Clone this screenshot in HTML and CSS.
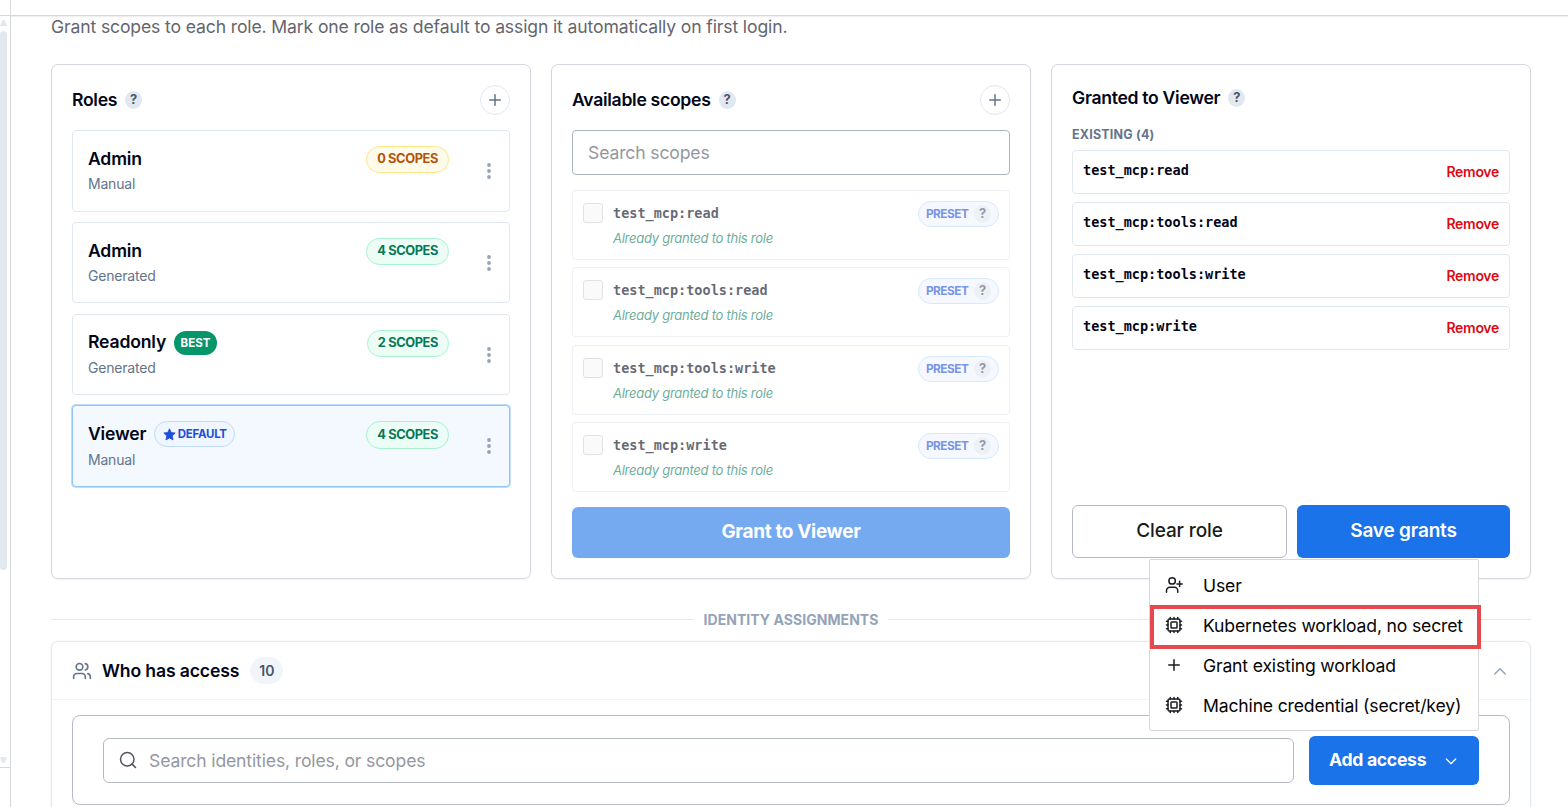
FILE: index.html
```html
<!DOCTYPE html>
<html lang="en">
<head>
<meta charset="utf-8">
<title>Roles and scopes</title>
<link rel="stylesheet" href="styles.css">
</head>
<body>
<svg class="defs" aria-hidden="true">
  <symbol id="plus" viewBox="0 0 24 24"><path d="M5 12h14M12 5v14"/></symbol>
  <symbol id="dots" viewBox="0 0 4 16"><circle cx="2" cy="2" r="1.9"/><circle cx="2" cy="8" r="1.9"/><circle cx="2" cy="14" r="1.9"/></symbol>
  <symbol id="cpu" viewBox="0 0 24 24"><rect x="4" y="4" width="16" height="16" rx="2"/><rect x="8" y="8" width="8" height="8" rx="1"/><path d="M12 20v2M12 2v2M17 20v2M17 2v2M2 12h2M2 17h2M2 7h2M20 12h2M20 17h2M20 7h2M7 20v2M7 2v2"/></symbol>
  <symbol id="user-plus" viewBox="0 0 24 24"><path d="M2 21.500v-2a4.500 4.500 0 0 1 4.500-4.500h6a4.500 4.500 0 0 1 4.500 4.500v2"/><circle cx="9.5" cy="6.500" r="4.300"/><path d="M19.500 7v7M16 10.500h7"/></symbol>
  <symbol id="users" viewBox="0 0 24 24"><path d="M16 21v-2a4 4 0 0 0-4-4H6a4 4 0 0 0-4 4v2"/><path d="M16 3.128a4 4 0 0 1 0 7.744M22 21v-2a4 4 0 0 0-3-3.870"/><circle cx="9" cy="7" r="4"/></symbol>
  <symbol id="search" viewBox="0 0 24 24"><circle cx="11" cy="11" r="9"/><path d="m22 22-4.500-4.500"/></symbol>
  <symbol id="up" viewBox="0 0 24 24"><path d="m5 16 7-7 7 7"/></symbol>
  <symbol id="down" viewBox="0 0 24 24"><path d="m5 9 7 7 7-7"/></symbol>
  <symbol id="star" viewBox="0 0 24 24"><path d="M12 1.500l3.200 6.800 7.300 1-5.300 5.200 1.300 7.500L12 18.400 5.500 22l1.300-7.500L1.500 9.300l7.300-1z" stroke="currentColor" stroke-width="1.500" stroke-linejoin="round"/></symbol>
</svg>
<div class="shell">
  <aside class="sidebar">
    <div class="side-head"></div>
    <div class="side-scroll"><i class="arrow-up"></i><i class="thumb"></i><i class="arrow-down"></i></div>
    <div class="side-foot"></div>
  </aside>
  <div class="page">
    <header class="topbar"></header>
    <main class="content">
      <p class="intro">Grant scopes to each role. Mark one role as default to assign it automatically on first login.</p>
      <div class="columns">
        <section class="card">
          <div class="card-head"><h2 class="title">Roles</h2><span class="help">?</span><button class="round"><svg class="ic"><use href="#plus"/></svg></button></div>
          <div class="roles">
            <article class="role"><div class="role-main"><div class="role-line"><b class="role-name">Admin</b></div><span class="role-kind">Manual</span></div><span class="count warn">0 SCOPES</span><svg class="dots"><use href="#dots"/></svg></article>
            <article class="role"><div class="role-main"><div class="role-line"><b class="role-name">Admin</b></div><span class="role-kind">Generated</span></div><span class="count">4 SCOPES</span><svg class="dots"><use href="#dots"/></svg></article>
            <article class="role"><div class="role-main"><div class="role-line"><b class="role-name">Readonly</b><span class="best">BEST</span></div><span class="role-kind">Generated</span></div><span class="count">2 SCOPES</span><svg class="dots"><use href="#dots"/></svg></article>
            <article class="role selected"><div class="role-main"><div class="role-line"><b class="role-name">Viewer</b><span class="default"><svg class="star"><use href="#star"/></svg>DEFAULT</span></div><span class="role-kind">Manual</span></div><span class="count">4 SCOPES</span><svg class="dots"><use href="#dots"/></svg></article>
          </div>
        </section>
        <section class="card">
          <div class="card-head"><h2 class="title">Available scopes</h2><span class="help">?</span><button class="round"><svg class="ic"><use href="#plus"/></svg></button></div>
          <div class="field">Search scopes</div>
          <div class="scopes">
            <div class="scope"><i class="check"></i><div class="scope-main"><code class="code">test_mcp:read</code><em class="note">Already granted to this role</em></div><span class="preset">PRESET<span class="help">?</span></span></div>
            <div class="scope"><i class="check"></i><div class="scope-main"><code class="code">test_mcp:tools:read</code><em class="note">Already granted to this role</em></div><span class="preset">PRESET<span class="help">?</span></span></div>
            <div class="scope"><i class="check"></i><div class="scope-main"><code class="code">test_mcp:tools:write</code><em class="note">Already granted to this role</em></div><span class="preset">PRESET<span class="help">?</span></span></div>
            <div class="scope"><i class="check"></i><div class="scope-main"><code class="code">test_mcp:write</code><em class="note">Already granted to this role</em></div><span class="preset">PRESET<span class="help">?</span></span></div>
          </div>
          <button class="btn primary disabled">Grant to Viewer</button>
        </section>
        <section class="card">
          <div class="card-head compact"><h2 class="title">Granted to Viewer</h2><span class="help">?</span></div>
          <h3 class="existing">EXISTING (4)</h3>
          <div class="grants">
            <div class="grant"><code class="code">test_mcp:read</code><span class="remove">Remove</span></div>
            <div class="grant"><code class="code">test_mcp:tools:read</code><span class="remove">Remove</span></div>
            <div class="grant"><code class="code">test_mcp:tools:write</code><span class="remove">Remove</span></div>
            <div class="grant"><code class="code">test_mcp:write</code><span class="remove">Remove</span></div>
          </div>
          <div class="actions"><button class="btn outline">Clear role</button><button class="btn primary">Save grants</button></div>
        </section>
      </div>
      <div class="divider"><span>IDENTITY ASSIGNMENTS</span></div>
      <section class="access">
        <div class="access-head"><svg class="ic users"><use href="#users"/></svg><h2 class="title wide">Who has access</h2><span class="num">10</span><svg class="ic up"><use href="#up"/></svg></div>
        <div class="access-body">
          <div class="toolbar">
            <div class="search"><svg class="ic mag"><use href="#search"/></svg>Search identities, roles, or scopes</div>
            <div class="add-wrap">
              <button class="add"><span>Add access</span><svg class="ic"><use href="#down"/></svg></button>
              <div class="menu">
                <div class="item"><svg class="ic"><use href="#user-plus"/></svg>User</div>
                <div class="item marked"><svg class="ic"><use href="#cpu"/></svg>Kubernetes workload, no secret</div>
                <div class="item"><svg class="ic"><use href="#plus"/></svg>Grant existing workload</div>
                <div class="item"><svg class="ic"><use href="#cpu"/></svg>Machine credential (secret/key)</div>
              </div>
            </div>
          </div>
        </div>
      </section>
    </main>
  </div>
</div>
</body>
</html>
```
FILE: styles.css
```css
* { box-sizing: border-box; }
body { margin: 0; font-family: Inter, "Liberation Sans", sans-serif; color: #020617; background: #fff; overflow: hidden; }
h2, h3, p { margin: 0; }
button { font: inherit; padding: 0; }
.defs { display: none; }
.ic { fill: none; stroke: currentColor; stroke-width: 2; stroke-linecap: round; stroke-linejoin: round; width: 18px; height: 18px; flex: none; }

.shell { display: flex; height: 807px; overflow: hidden; }
.sidebar { width: 11px; flex: none; border-right: 1px solid #d5d7dc; display: flex; flex-direction: column; }
.side-head { height: 16px; border-bottom: 1px solid #d5d7dc; }
.side-scroll { height: 752px; border-bottom: 1px solid #d5d7dc; display: flex; flex-direction: column; padding: 4px 0; }
.arrow-up { width: 7px; height: 6px; background: #e2e8f0; clip-path: polygon(35% 0, 65% 0, 100% 100%, 0 100%); }
.thumb { width: 7px; height: 539px; margin-top: 5px; background: #e2e8f0; border-radius: 4px; }
.arrow-down { width: 7px; height: 6px; margin-top: auto; background: #e2e8f0; clip-path: polygon(0 0, 100% 0, 65% 100%, 35% 100%); }
.page { flex: 1; min-width: 0; }
.topbar { height: 16px; border-bottom: 1px solid #d5d7dc; box-shadow: 0 1px 1px #f0f0f2; }
.content { padding: 0 37px 0 40px; }

.intro { height: 48px; line-height: 22px; font-size: 17.6px; letter-spacing: -.14px; color: #64666d; white-space: nowrap; }
.columns { display: grid; grid-template-columns: repeat(3, 1fr); gap: 20px; }
.card { height: 515px; border: 1px solid #d5d7de; border-radius: 7px; padding: 20px; box-shadow: 0 1px 2px #0000000c; display: flex; flex-direction: column; }
.card-head { display: flex; align-items: center; height: 30px; flex: none; }
.card-head.compact { height: 25px; }
.title { font-size: 17.600px; line-height: 24px; font-weight: 600; letter-spacing: -.3px; white-space: nowrap; }
.title.wide { letter-spacing: -.14px; }
.help { width: 17px; height: 18px; margin-left: 8px; border-radius: 50%; background: #e2e8f0; color: #475569; font-size: 12.800px; font-weight: 700; line-height: 17px; text-align: center; }
.round { margin-left: auto; width: 30px; height: 30px; border: 1px solid #e2e8f0; border-radius: 50%; background: #fff; color: #64748b; display: grid; place-items: center; }

.roles { display: flex; flex-direction: column; gap: 10.200px; margin-top: 15px; }
.role { height: 81.600px; border: 1px solid #e2e8f0; border-radius: 4px; display: flex; padding: 15px 18px 0 15px; }
.role.selected { background: #f4f8ff; border-color: #93c5fd; box-shadow: 0 0 0 1px #bfdbfe; }
.role-main { flex: 1; }
.role-line { display: flex; align-items: center; height: 26px; gap: 8px; }
.role-name { font-size: 17.600px; font-weight: 600; letter-spacing: -.18px; line-height: 24px; margin-top: -.2px; }
.role:first-child .role-name, .selected .role-name { margin-top: -1px; }
.role-kind { display: block; font-size: 14px; line-height: 24px; letter-spacing: -.2px; color: #64748b; }
.selected .role-kind { line-height: 25px; }
.best { height: 24px; line-height: 24px; padding: 0 6.500px; border-radius: 12px; background: #059669; color: #fff; font-size: 11.500px; font-weight: 700; }
.default { height: 26px; padding: 0 7px 0 8px; border: 1px solid #bfdbfe; border-radius: 13px; background: #eff6ff; color: #1d4ed8; display: flex; align-items: center; gap: 1.500px; font-size: 11.500px; font-weight: 700; letter-spacing: -.3px; }
.star { width: 13px; height: 13px; fill: currentColor; }
.count { height: 27px; line-height: 24px; padding: 0 10px; border: 1px solid #a7f3d0; border-radius: 14px; background: #ecfdf5; color: #047857; font-size: 12.800px; font-weight: 700; letter-spacing: -.38px; white-space: nowrap; }
.selected .count { height: 28px; line-height: 26px; }
.count.warn { background: #fffbeb; border-color: #fde68a; color: #b45309; }
.dots { width: 4px; height: 16px; margin: 17px 0 0 38px; fill: #94a3b8; }

.field { height: 45px; flex: none; margin-top: 15px; padding: 0 15px; border: 1px solid #adb3bf; border-radius: 4px; font-size: 17.600px; line-height: 43px; letter-spacing: -.15px; color: #94979e; }
.scopes { display: flex; flex-direction: column; gap: 7.400px; margin-top: 15px; }
.scope { height: 70px; border: 1px solid #e2e8f0; border-radius: 4px; padding: 10px; display: flex; opacity: .6; }
.check { width: 20px; height: 20px; margin-top: 2px; border: 1px solid #cfcfcf; border-radius: 3px; background: #f8f8f8; }
.scope-main { flex: 1; margin-left: 10px; }
.code { display: block; font-family: "DejaVu Sans Mono", "Liberation Mono", monospace; font-weight: 700; font-size: 13.530px; line-height: 24px; }
.grant .code { line-height: 23px; }
.note { display: block; font-size: 13px; line-height: 27px; letter-spacing: -.26px; color: #047857; }
.preset { height: 26px; padding: 0 7px; border: 1px solid #bfdbfe; border-radius: 13px; background: #eff6ff; color: #1d4ed8; font-size: 11.800px; font-weight: 700; letter-spacing: -.45px; line-height: 22px; display: flex; align-items: center; }
.preset .help { margin-left: 5.500px; letter-spacing: 0; line-height: 17px; }
.btn { height: 53px; border: 0; border-radius: 6px; font-size: 19px; font-weight: 600; letter-spacing: -.2px; line-height: 51px; padding-bottom: 2px; }
.primary { background: #1a73e8; color: #fff; }
.disabled { height: 51px; margin-top: auto; opacity: .6; line-height: 49px; flex: none; font-weight: 700; letter-spacing: -.35px; }
.outline { background: #fff; border: 1px solid #b5bac5; color: #1b1c20; line-height: 49px; font-weight: 500; letter-spacing: -.1px; }

.existing { font-size: 12.500px; line-height: 22px; margin-top: 14px; font-weight: 700; letter-spacing: .2px; color: #64748b; }
.grants { display: flex; flex-direction: column; gap: 8px; margin-top: 4px; }
.grant { height: 44px; border: 1px solid #e2e8f0; border-radius: 4px; padding: 8px 10px; display: flex; justify-content: space-between; }
.remove { font-size: 14px; font-weight: 600; line-height: 26px; letter-spacing: -.3px; color: #dc0a14; }
.actions { display: grid; grid-template-columns: 215px 213px; gap: 10px; margin-top: auto; }

.divider { display: flex; align-items: center; height: 62px; padding: 20px 0 1px; gap: 10px; font-size: 14px; font-weight: 700; letter-spacing: .05px; color: #94a3b8; }
.divider span { line-height: 20px; margin-top: 1px; }
.divider::before, .divider::after { content: ""; flex: 1; height: 1px; background: #e2e8f0; }

.access { border: 1px solid #e2e8f0; border-radius: 7px; height: 200px; box-shadow: 0 0 2px #00000014; }
.access-head { height: 58px; display: flex; align-items: center; padding: 0 20px; border-bottom: 1px solid #f1f5f9; }
.users { width: 20px; height: 20px; color: #64748b; margin-right: 10px; }
.num { margin-left: 11px; padding: 0 9px; height: 27px; border-radius: 14px; background: #f1f5f9; color: #475569; font-size: 14px; line-height: 28px; font-weight: 600; }
.up { margin: 0 1px 0 auto; color: #94a3b8; }
.access-body { padding: 15px 20px; }
.toolbar { height: 90px; border: 1px solid #b5bac5; border-radius: 8px; padding: 20px 30px; display: flex; gap: 15px; }
.search { flex: 1; height: 45px; margin-top: 2px; border: 1px solid #b5bac5; border-radius: 6px; padding: 0 15px; display: flex; align-items: center; font-size: 17.600px; letter-spacing: -.15px; color: #94979e; }
.mag { color: #52555c; margin: -1px 12px 0 0; }
.add-wrap { position: relative; }
.add { width: 170px; height: 49px; border: 0; border-radius: 6px; background: #1a73e8; color: #fff; font-size: 17.600px; font-weight: 700; letter-spacing: -.3px; display: flex; align-items: center; justify-content: space-between; padding: 0 20px; }
.add span { padding-bottom: 2px; }
.add .ic { width: 16px; height: 16px; }
/* Opens upwards, right-aligned with the button */
.menu { position: absolute; right: 0; bottom: 53px; width: 330px; height: 172px; padding: 5px 0; background: #fff; border: 1px solid #d5d7dc; border-radius: 2px; }
.item { height: 40px; padding-left: 15px; display: flex; align-items: center; gap: 20px; font-size: 17.600px; letter-spacing: -.17px; white-space: nowrap; color: #050505; }
.item .ic { color: #1b1c20; margin-top: -1px; }
.marked { height: 44px; width: 331px; margin: 0 0 -4px; padding-bottom: 3px; outline: 4px solid #e5484d; outline-offset: -4px; }
```
